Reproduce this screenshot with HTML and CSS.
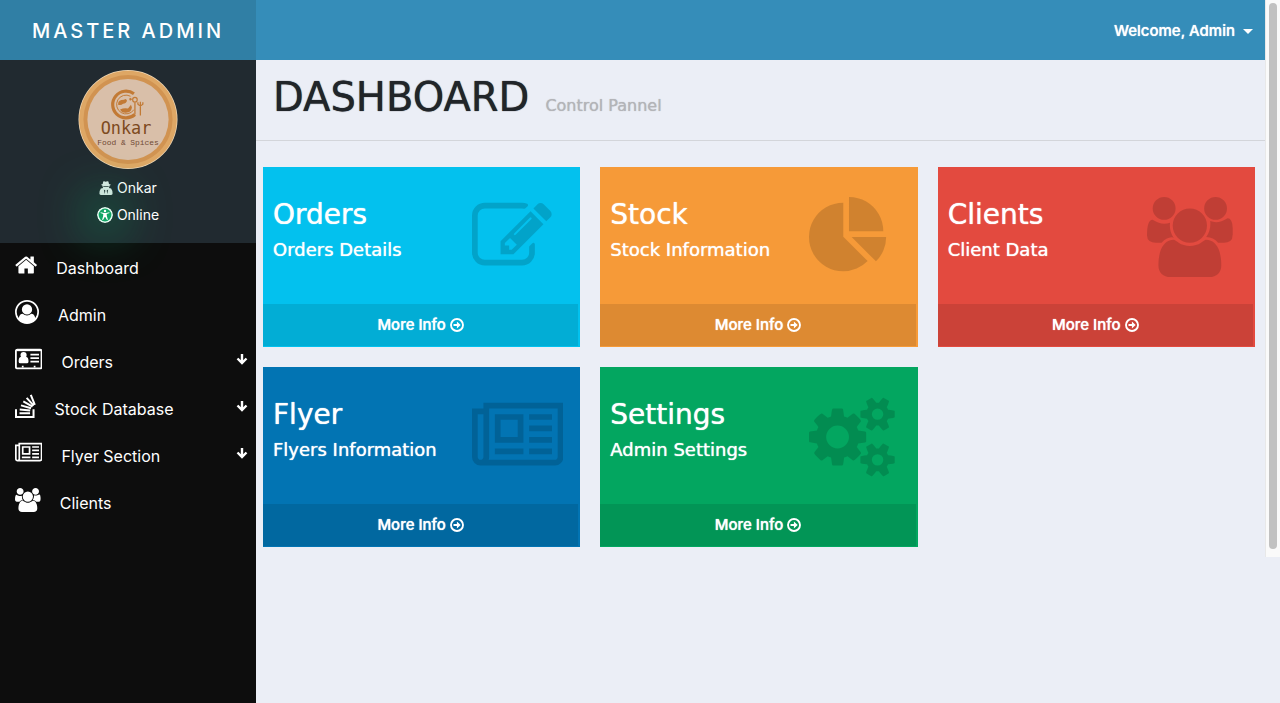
FILE: index.html
```html
<!DOCTYPE html>
<html lang="en">
<head>
<meta charset="utf-8">
<meta name="viewport" content="width=device-width, initial-scale=1">
<title>Master Admin - Dashboard</title>
<link rel="stylesheet" href="styles.css">
</head>
<body>
<svg class="sprite" aria-hidden="true">
  <symbol id="users" viewBox="-64 0 1920 1792"><path d="M529 896q-162 5-265 128h-134q-82 0-138-40.5t-56-118.5q0-353 124-353 6 0 43.5 21t97.5 42.5 119 21.5q67 0 133-23-5 37-5 66 0 159 93 290zm1071 637q0 120-73 189.5t-194 69.5h-874q-121 0-194-69.5t-73-189.5q0-53 3.5-103.5t14-109 26.5-108.5 43-97.5 62-81 85.5-53.5 111.5-20q10 0 43 21.5t73 48 107 48 135 21.5 135-21.5 107-48 73-48 43-21.5q61 0 111.5 20t85.5 53.5 62 81 43 97.5 26.5 108.5 14 109 3.5 103.5zm-1024-1277q0 106-75 181t-181 75-181-75-75-181 75-181 181-75 181 75 75 181zm704 384q0 159-112.5 271.5t-271.5 112.5-271.5-112.5-112.5-271.5 112.5-271.5 271.5-112.5 271.5 112.5 112.5 271.5zm576 225q0 78-56 118.5t-138 40.5h-134q-103-123-265-128 93-131 93-290 0-29-5-66 66 23 133 23 59 0 119-21.5t97.5-42.5 43.5-21q124 0 124 353zm-128-609q0 106-75 181t-181 75-181-75-75-181 75-181 181-75 181 75 75 181z"/></symbol>
  <symbol id="newspaper" viewBox="0 0 2048 1792"><path d="M1024 512h-384v384h384v-384zm128 640v128h-640v-128h640zm0-768v640h-640v-640h640zm640 768v128h-512v-128h512zm0-256v128h-512v-128h512zm0-256v128h-512v-128h512zm0-256v128h-512v-128h512zm-1536 960v-960h-128v960q0 26 19 45t45 19 45-19 19-45zm1664 0v-1088h-1536v1088q0 33-11 64h1483q26 0 45-19t19-45zm128-1216v1216q0 80-56 136t-136 56h-1664q-80 0-136-56t-56-136v-1088h256v-128h1792z"/></symbol>
  <symbol id="arrow-down" viewBox="0 0 12 12"><path d="M6 1v9M1.500 5.500L6 10l4.500-4.500" fill="none" stroke="currentColor" stroke-width="2.400"/></symbol>
  <symbol id="arrow-circle" viewBox="0 0 14 14"><circle cx="7" cy="7" r="6" fill="none" stroke="currentColor" stroke-width="1.900"/><path d="M3.500 6h3.400V3.600L10.700 7 6.900 10.400V8H3.500z"/></symbol>
</svg>
<div class="layout">
  <aside class="sidebar">
    <div class="brand">MASTER ADMIN</div>
    <div class="profile">
      <svg class="logo" viewBox="0 0 100 100" role="img" aria-label="Onkar Food &amp; Spices">
        <circle cx="50" cy="50" r="50" fill="#f0d9b8"/>
        <circle cx="50" cy="50" r="49.300" fill="#dea765"/>
        <circle cx="50" cy="50" r="45" fill="#d19351"/>
        <circle cx="50" cy="50" r="41" fill="#d9bfa9"/>
        <g fill="none" stroke="#c27a35">
          <path d="M56 24A13.500 13.500 0 1 0 57 45" stroke-width="3.200"/>
          <path d="M52.500 26.500A9.500 9.500 0 1 0 56 40" stroke-width="1"/>
          <circle cx="57" cy="30" r="2.300" stroke-width="1.200"/>
          <path d="M57 32.500V45M62.500 36V46M60 32.500v2q2.500 3 5 0v-2M62.500 32V37" stroke-width="1.300"/>
        </g>
        <path d="M40 34q0-4 6-4 2-2 3 1-1 3-4 3-2 2-5 1zM42 40q4-2 8-1l3-4 1 3q-1 5-5 5-5 1-7-3zM51 29l2-1 1 2-2 1z" fill="#c27a35"/>
        <text x="48" y="65" class="logo-name">Onkar</text>
        <text x="50" y="76" class="logo-tag">Food &amp; Spices</text>
      </svg>
      <div class="profile-line">
        <svg class="small-icon" viewBox="0 0 14 14"><path d="M4.200.6Q5 0 6.600.7 8.500 0 9.400.6L10 3l2 .8-1.500.9Q10.500 6 9.800 7l2.300.6q1.500 2 1.500 5 0 1.400-1.500 1.400H1.900Q.4 14 .4 12.600q0-3 1.500-5L4.200 7Q3.500 6 3.500 4.700L2 3.800 3.700 3z"/><path d="M4.800 8.500l1.500 1-.5 3.500zM9.200 8.500l-1.500 1 .5 3.500zM4.300 5.200h5.400v.7H4.300z" fill="#222b30"/></svg>
        <span>Onkar</span>
      </div>
      <div class="profile-line">
        <svg class="online-icon" viewBox="0 0 16 16"><circle cx="8" cy="8" r="8" fill="#e5fff3"/><circle cx="8" cy="8" r="6.400" fill="#12a566"/><circle cx="8" cy="4" r="1.200"/><path d="M3.700 5.300L7 6h2l3.300-.7.200.8-2.800.9.200 2.300 1 3.500-.9.300L8.300 10h-.6L6 13.100l-.9-.3 1-3.500.2-2.300-2.800-.9z"/></svg>
        <span>Online</span>
      </div>
    </div>
    <nav class="menu">
      <a href="#"><svg class="icon" viewBox="64 0 1664 1792"><path d="M1472 992v480q0 26-19 45t-45 19h-384v-384h-256v384h-384q-26 0-45-19t-19-45v-480q0-1 .5-3t.5-3l575-474 575 474q1 2 1 6zm223-69l-62 74q-8 9-21 11h-3q-13 0-21-7l-692-577-692 577q-12 8-24 7-13-2-21-11l-62-74q-8-10-7-23.500t11-21.500l719-599q32-26 76-26t76 26l244 204v-195q0-14 9-23t23-9h192q14 0 23 9t9 23v408l219 182q10 8 11 21.500t-7 23.500z"/></svg><span>Dashboard</span></a>
      <a href="#"><svg class="icon" viewBox="0 0 1792 1792"><path d="M896 0q182 0 348 71t286 191 191 286 71 348q0 181-70.500 347t-190.500 286-286 191.500-349 71.500-349-71-285.500-191.500-190.500-286-71-347.500 71-348 191-286 286-191 348-71zm619 1351q149-205 149-455 0-156-61-298t-164-245-245-164-298-61-298 61-245 164-164 245-61 298q0 250 149 455 66-327 306-327 131 128 313 128t313-128q240 0 306 327zm-235-647q0-159-112.500-271.500t-271.500-112.500-271.500 112.500-112.500 271.500 112.500 271.500 271.500 112.500 271.500-112.500 112.500-271.500z"/></svg><span>Admin</span></a>
      <a href="#"><svg class="icon" viewBox="0 0 2048 1792"><rect x="65" y="200" width="1918" height="1400" rx="110" fill="none" stroke="currentColor" stroke-width="140"/><rect x="100" y="150" width="1848" height="160"/><circle cx="640" cy="600" r="230"/><path d="M270 1080q0-330 190-350 180 120 360 0 190 20 190 350 0 140-130 140H400q-130 0-130-140zM1152 512h640v128h-640zM1152 768h640v128h-640zM1152 1024h640v128h-640zM512 1400h130v140H512zM1400 1400h130v140h-130z"/></svg><span>Orders</span><svg class="chevron"><use href="#arrow-down"/></svg></a>
      <a href="#"><svg class="icon" viewBox="0 0 1536 1792"><g fill="none" stroke="currentColor" stroke-width="150"><path d="M75 1130v585h1310v-585"/><path d="M335 1440h790M352 1165l785 75M445 850l755 215M620 545l690 400M870 285l530 585M1180 60l300 760"/></g></svg><span>Stock Database</span><svg class="chevron"><use href="#arrow-down"/></svg></a>
      <a href="#"><svg class="icon" viewBox="0 0 2048 1792"><use href="#newspaper" width="2048" height="1792"/></svg><span>Flyer Section</span><svg class="chevron"><use href="#arrow-down"/></svg></a>
      <a href="#"><svg class="icon" viewBox="0 0 1920 1792"><use href="#users" width="1920" height="1792"/></svg><span>Clients</span></a>
    </nav>
  </aside>
  <div class="page">
    <header class="topbar"><button class="account" type="button">Welcome, Admin<span class="caret"></span></button></header>
    <main>
      <div class="heading"><h1>DASHBOARD</h1><small>Control Pannel</small></div>
      <div class="cards">
        <section class="card cyan">
          <div class="card-body"><div><h2>Orders</h2><p>Orders Details</p></div>
            <svg class="card-icon" viewBox="0 0 2048 1792"><path d="M888 1184l116-116-152-152-116 116v56h96v96h56zm440-720q-16-16-33 1l-350 350q-17 17-1 33t33-1l350-350q17-17 1-33zm80 594v190q0 119-84.500 203.500t-203.500 84.500h-832q-119 0-203.500-84.500t-84.500-203.500v-832q0-119 84.500-203.500t203.500-84.500h832q63 0 117 25 15 7 18 23 3 17-9 29l-49 49q-14 14-32 8-23-6-45-6h-832q-66 0-113 47t-47 113v832q0 66 47 113t113 47h832q66 0 113-47t47-113v-126q0-13 9-22l64-64q15-15 35-7t20 29zm-96-738l288 288-672 672h-288v-288zm444 132l-92 92-288-288 92-92q28-28 68-28t68 28l152 152q28 28 28 68t-28 68z"/></svg></div>
          <a class="more" href="#">More Info <svg><use href="#arrow-circle"/></svg></a>
        </section>
        <section class="card orange">
          <div class="card-body"><div><h2>Stock</h2><p>Stock Information</p></div>
            <svg class="card-icon" viewBox="0 0 2048 1792"><path d="M768 890l546 546q-106 108-247.500 168t-298.500 60q-209 0-385.500-103t-279.500-279.500-103-385.500 103-385.500 279.500-279.500 385.500-103v762zm187 6h773q0 157-60 298.500t-168 247.500zm709-128h-768v-768q209 0 385.500 103t279.500 279.500 103 385.500z"/></svg></div>
          <a class="more" href="#">More Info <svg><use href="#arrow-circle"/></svg></a>
        </section>
        <section class="card red">
          <div class="card-body"><div><h2>Clients</h2><p>Client Data</p></div>
            <svg class="card-icon" viewBox="0 0 2048 1792"><use href="#users" width="1920" height="1792"/></svg></div>
          <a class="more" href="#">More Info <svg><use href="#arrow-circle"/></svg></a>
        </section>
        <section class="card blue">
          <div class="card-body"><div><h2>Flyer</h2><p>Flyers Information</p></div>
            <svg class="card-icon" viewBox="0 0 2048 1792"><use href="#newspaper" width="2048" height="1792"/></svg></div>
          <a class="more" href="#">More Info <svg><use href="#arrow-circle"/></svg></a>
        </section>
        <section class="card green">
          <div class="card-body"><div><h2>Settings</h2><p>Admin Settings</p></div>
            <svg class="card-icon" viewBox="0 0 2048 1792"><path d="M896 896q0-106-75-181t-181-75-181 75-75 181 75 181 181 75 181-75 75-181zm768 512q0-52-38-90t-90-38-90 38-38 90q0 53 37.500 90.500t90.500 37.500 90.500-37.500 37.500-90.500zm0-1024q0-52-38-90t-90-38-90 38-38 90q0 53 37.500 90.500t90.500 37.500 90.500-37.500 37.500-90.500zm-384 421v185q0 10-7 19.500t-16 10.500l-155 24q-11 35-32 76 34 48 90 115 7 11 7 20 0 12-7 19-23 30-82.500 89.500t-78.500 59.500q-11 0-21-7l-115-90q-37 19-77 31-11 108-23 155-7 24-30 24h-186q-11 0-20-7.500t-10-17.500l-23-153q-34-10-75-31l-118 89q-7 7-20 7-11 0-21-8-144-133-144-160 0-9 7-19 10-14 41-53t47-61q-23-44-35-82l-152-24q-10-1-17-9.500t-7-19.500v-185q0-10 7-19.500t16-10.500l155-24q11-35 32-76-34-48-90-115-7-11-7-20 0-12 7-20 22-30 82-89t79-59q11 0 21 7l115 90q34-18 77-32 11-108 23-154 7-24 30-24h186q11 0 20 7.500t10 17.500l23 153q34 10 75 31l118-89q8-7 20-7 11 0 21 8 144 133 144 160 0 8-7 19-12 16-42 54t-45 60q23 48 34 82l152 23q10 2 17 10.500t7 19.500zm640 533v140q0 16-149 31-12 27-30 52 51 113 51 138 0 4-4 7-122 71-124 71-8 0-46-47t-52-68q-20 2-30 2t-30-2q-14 21-52 68t-46 47q-2 0-124-71-4-3-4-7 0-25 51-138-18-25-30-52-149-15-149-31v-140q0-16 149-31 13-29 30-52-51-113-51-138 0-4 4-7 4-2 35-20t59-34 30-16q8 0 46 46.500t52 67.500q20-2 30-2t30 2q51-71 92-112l6-2q4 0 124 70 4 3 4 7 0 25-51 138 17 23 30 52 149 15 149 31zm0-1024v140q0 16-149 31-12 27-30 52 51 113 51 138 0 4-4 7-122 71-124 71-8 0-46-47t-52-68q-20 2-30 2t-30-2q-14 21-52 68t-46 47q-2 0-124-71-4-3-4-7 0-25 51-138-18-25-30-52-149-15-149-31v-140q0-16 149-31 13-29 30-52-51-113-51-138 0-4 4-7 4-2 35-20t59-34 30-16q8 0 46 46.500t52 67.500q20-2 30-2t30 2q51-71 92-112l6-2q4 0 124 70 4 3 4 7 0 25-51 138 17 23 30 52 149 15 149 31z"/></svg></div>
          <a class="more" href="#">More Info <svg><use href="#arrow-circle"/></svg></a>
        </section>
      </div>
    </main>
  </div>
  <div class="scroll-track"><div class="scroll-thumb"></div></div>
</div>
</body>
</html>
```
FILE: styles.css
```css
* { box-sizing: border-box; }
body {
  margin: 0;
  background: #ebeef6;
  color: #212529;
  font: 16px/24px Inter, "Liberation Sans", sans-serif;
}
a { color: inherit; text-decoration: none; }
h1, h2, p { margin: 0; }
svg { fill: currentColor; flex: none; }
.sprite { display: none; }
.layout {
  display: grid;
  grid-template-columns: 20% 1fr 15px;
  min-height: 100vh;
}

.sidebar { background: #0d0d0d; color: #fff; }
.brand {
  display: flex;
  align-items: center;
  justify-content: center;
  height: 60px;
  padding-top: 2px;
  background: #307fa5;
  font-size: 20px;
  font-weight: 500;
  letter-spacing: 3px;
}
.profile {
  display: flex;
  flex-direction: column;
  align-items: center;
  padding: 10px 0 15px;
  background: #212a30;
  font-size: 14px;
}
.logo { width: 100px; height: 99px; margin-bottom: 5px; }
.logo-name { font: 17px "DejaVu Sans Mono", monospace; fill: #7d4a20; text-anchor: middle; }
.logo-tag { font: 8px "Liberation Mono", monospace; fill: #704a35; text-anchor: middle; }
.profile-line { display: flex; align-items: center; gap: 4px; height: 27px; }
.small-icon { width: 14px; height: 14px; fill: #e2ece9; }
.online-icon {
  width: 16px;
  height: 16px;
  border-radius: 50%;
  box-shadow: 0 0 50px 6px #00b366;
}
.menu a {
  display: flex;
  align-items: center;
  height: 47px;
  padding: 0 8px 3px 15px;
}
.menu span { margin-left: 19px; padding-top: 6px; }
.icon { width: auto; height: 24px; }
.chevron { width: 12px; height: 12px; margin-left: auto; }

.topbar {
  display: flex;
  align-items: center;
  justify-content: flex-end;
  height: 60px;
  padding: 2px 12px 0;
  background: #358db9;
}
.account {
  display: flex;
  align-items: center;
  gap: 8px;
  padding: 0;
  border: 0;
  background: none;
  color: #fff;
  font: inherit;
  font-size: 15px;
  font-weight: 500;
  text-shadow: 0 0 1px currentColor;
}
.caret { border: 5px solid transparent; border-top-color: #fff; border-bottom: 0; }
.heading {
  display: flex;
  align-items: baseline;
  gap: 16px;
  height: 81px;
  padding: 13px 17px 0;
  border-bottom: 1px solid #d3d5da;
  font-family: "DejaVu Sans", sans-serif;
}
h1 { font-size: 40px; font-weight: 400; line-height: 48px; text-shadow: 0 0 1px currentColor; }
.heading small { color: #b3b4b8; font-size: 16px; text-shadow: 0 0 1px currentColor; }
.cards {
  display: grid;
  grid-template-columns: repeat(3, 1fr);
  gap: 20px;
  padding: 26px 10px 20px 7px;
}
.card { height: 180px; color: #fff; }
.card-body {
  display: flex;
  justify-content: space-between;
  height: 137px;
  padding: 30px 17px 0 10px;
  font-family: "DejaVu Sans", sans-serif;
  text-shadow: 0 0 1px currentColor;
}
h2 { padding-top: 1px; font-size: 28px; font-weight: 400; line-height: 34px; }
.card p { margin-top: 6px; font-size: 18px; line-height: 24px; }
.card-icon { height: 80px; color: #000; opacity: .15; }
.more {
  display: flex;
  align-items: center;
  justify-content: center;
  gap: 4px;
  height: 42px;
  margin-right: 2px;
  background: rgba(0, 0, 0, .1);
  font-size: 15px;
  font-weight: 500;
  text-shadow: 0 0 1px currentColor;
}
.more svg { width: 14px; height: 14px; }
.cyan { background: #03c1ee; }
.orange { background: #f69a38; }
.red { background: #e34a3f; }
.blue { background: #0274b3; }
.green { background: #03a660; }

.scroll-track {
  height: 557px;
  padding: 3px;
  border-left: 1px solid #e8e8e8;
  background: #fafafa;
}
.scroll-thumb { height: 546px; border-radius: 4px; background: #c1c1c1; }
```
